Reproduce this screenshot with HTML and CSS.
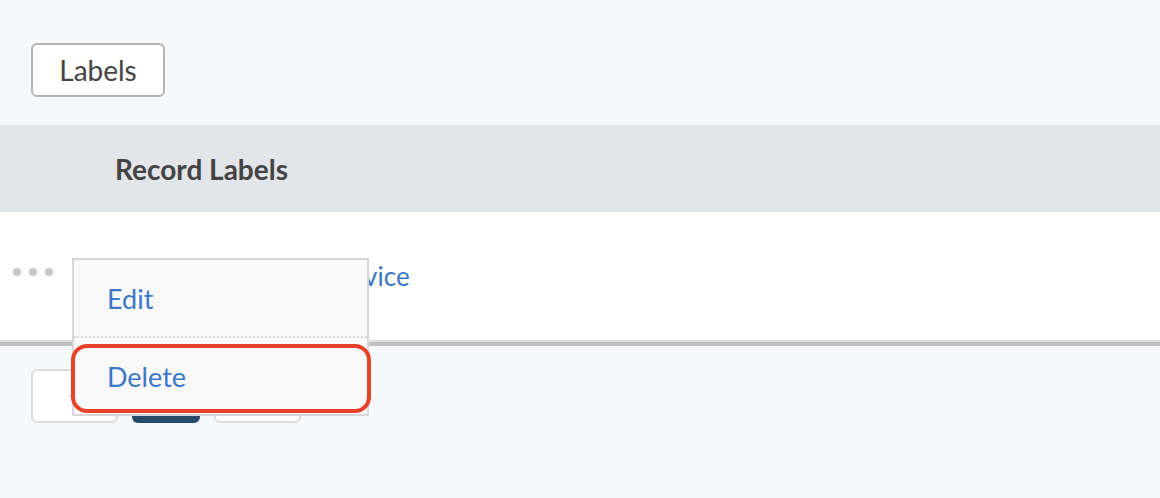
FILE: index.html
```html
<!DOCTYPE html>
<html>
<head>
<meta charset="utf-8">
<link rel="stylesheet" href="styles.css">
</head>
<body>
<div class="toolbar">
  <button class="btn">Labels</button>
</div>
<div class="table">
  <div class="thead">
    <div class="th-spacer"></div>
    <div class="th">Record Labels</div>
  </div>
  <div class="row">
    <div class="actions">
      <span class="dot"></span><span class="dot"></span><span class="dot"></span>
      <div class="menu">
        <div class="menu-item">Edit</div>
        <div class="menu-item sep">Delete</div>
        <div class="highlight"></div>
      </div>
    </div>
    <a class="link">Priority Customer Service</a>
  </div>
</div>
<div class="pager">
  <div class="pbtn"><svg width="12" height="14" viewBox="0 0 12 14"><polygon points="0,7 12,0 12,14" fill="#c6c6c6"/></svg></div>
  <div class="pbtn current"></div>
  <div class="pbtn"></div>
</div>
</body>
</html>
```
FILE: styles.css
```css
html, body {
  margin: 0;
  padding: 0;
  background: #f7f8fa;
  font-family: Lato, "Open Sans", sans-serif;
  color: #444;
}
.toolbar {
  padding: 43px 0 0 31px;
  height: 125px;
  box-sizing: border-box;
}
.btn {
  width: 134px;
  height: 54px;
  background: #fff;
  border: 2px solid #b4b4b4;
  border-radius: 6px;
  font-family: Lato, sans-serif;
  font-size: 28px;
  color: #444;
  padding: 0;
}
.table {
  border-bottom: 4px solid #c0c0c2;
}
.thead {
  display: flex;
  align-items: center;
  height: 87px;
  background: #e2e5ea;
}
.th-spacer { width: 115px; }
.th {
  font-weight: 700;
  font-size: 28px;
  color: #444;
}
.row {
  display: flex;
  align-items: center;
  height: 128px;
  background: #fff;
  border-bottom: 2px solid #e0e0e0;
}
.actions {
  position: relative;
  width: 102px;
  padding-left: 13px;
  display: flex;
  gap: 8px;
  align-self: center;
  margin-top: -8px;
}
.dot {
  width: 8px;
  height: 8px;
  border-radius: 50%;
  background: #c8c8c8;
}
.link {
  font-size: 26px;
  color: #3b78c5;
  margin-left: 4px;
}
.menu {
  position: absolute;
  left: 72px;
  top: -10px;
  width: 293px;
  background: #f9f9f9;
  border: 2px solid #d8d8d8;
  z-index: 2;
}
.menu-item {
  height: 76px;
  display: flex;
  align-items: center;
  padding-left: 33px;
  font-size: 27px;
  color: #3b78c5;
}
.menu-item.sep {
  border-top: 2px dotted #d6d6d6;
}
.highlight {
  position: absolute;
  left: -3px;
  top: 84px;
  width: 292px;
  height: 61px;
  border: 4px solid #e8412a;
  border-radius: 16px;
}
.pager {
  display: flex;
  gap: 14px;
  padding: 23px 0 0 31px;
}
.pbtn {
  width: 83px;
  height: 50px;
  background: #fff;
  border: 2px solid #dcdcdc;
  border-radius: 6px;
  display: flex;
  align-items: center;
  justify-content: center;
}
.pbtn.current {
  width: 68px;
  height: 54px;
  border: none;
  background: #264a6c;
}
```
